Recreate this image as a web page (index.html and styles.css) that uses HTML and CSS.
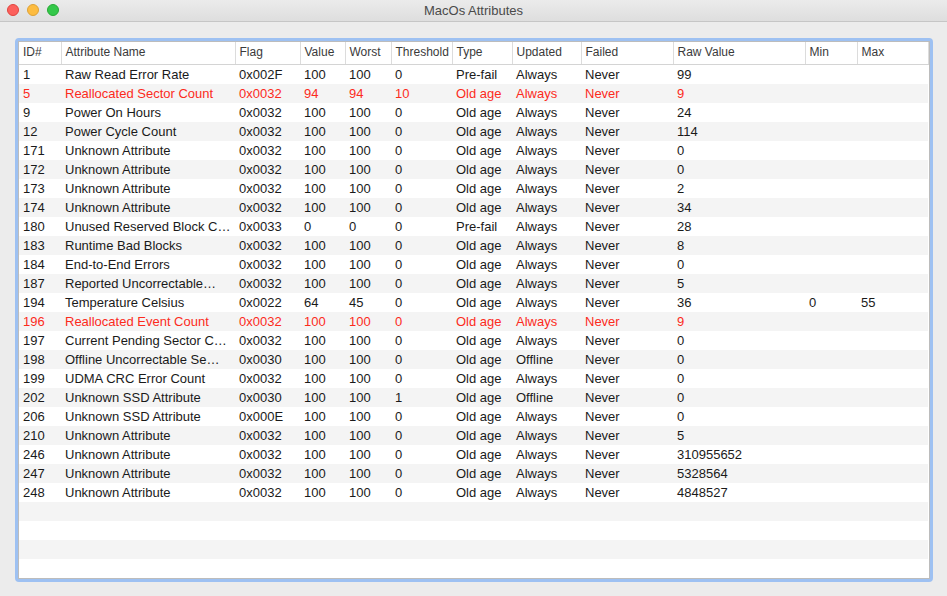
FILE: index.html
```html
<!DOCTYPE html>
<html>
<head>
<meta charset="utf-8">
<title>MacOs Attributes</title>
<link rel="stylesheet" href="styles.css">
</head>
<body>
<div class="window">
  <div class="titlebar">
    <div class="lights">
      <span class="light close"></span>
      <span class="light min"></span>
      <span class="light max"></span>
    </div>
    <div class="title">MacOs Attributes</div>
  </div>
  <div class="content">
    <div class="frame">
      <div class="inner">
        <table class="grid">
          <colgroup>
            <col class="c-id"><col class="c-name"><col class="c-flag"><col class="c-val"><col class="c-worst"><col class="c-thr"><col class="c-type"><col class="c-upd"><col class="c-fail"><col class="c-raw"><col class="c-min"><col class="c-max">
          </colgroup>
          <thead>
            <tr><th class="first">ID#</th><th>Attribute Name</th><th>Flag</th><th>Value</th><th>Worst</th><th>Threshold</th><th>Type</th><th>Updated</th><th>Failed</th><th>Raw Value</th><th>Min</th><th>Max</th></tr>
          </thead>
          <tbody>
            <tr><td class="first">1</td><td>Raw Read Error Rate</td><td>0x002F</td><td>100</td><td>100</td><td>0</td><td>Pre-fail</td><td>Always</td><td>Never</td><td>99</td><td></td><td></td></tr>
            <tr class="warn"><td class="first">5</td><td>Reallocated Sector Count</td><td>0x0032</td><td>94</td><td>94</td><td>10</td><td>Old age</td><td>Always</td><td>Never</td><td>9</td><td></td><td></td></tr>
            <tr><td class="first">9</td><td>Power On Hours</td><td>0x0032</td><td>100</td><td>100</td><td>0</td><td>Old age</td><td>Always</td><td>Never</td><td>24</td><td></td><td></td></tr>
            <tr><td class="first">12</td><td>Power Cycle Count</td><td>0x0032</td><td>100</td><td>100</td><td>0</td><td>Old age</td><td>Always</td><td>Never</td><td>114</td><td></td><td></td></tr>
            <tr><td class="first">171</td><td>Unknown Attribute</td><td>0x0032</td><td>100</td><td>100</td><td>0</td><td>Old age</td><td>Always</td><td>Never</td><td>0</td><td></td><td></td></tr>
            <tr><td class="first">172</td><td>Unknown Attribute</td><td>0x0032</td><td>100</td><td>100</td><td>0</td><td>Old age</td><td>Always</td><td>Never</td><td>0</td><td></td><td></td></tr>
            <tr><td class="first">173</td><td>Unknown Attribute</td><td>0x0032</td><td>100</td><td>100</td><td>0</td><td>Old age</td><td>Always</td><td>Never</td><td>2</td><td></td><td></td></tr>
            <tr><td class="first">174</td><td>Unknown Attribute</td><td>0x0032</td><td>100</td><td>100</td><td>0</td><td>Old age</td><td>Always</td><td>Never</td><td>34</td><td></td><td></td></tr>
            <tr><td class="first">180</td><td>Unused Reserved Block C…</td><td>0x0033</td><td>0</td><td>0</td><td>0</td><td>Pre-fail</td><td>Always</td><td>Never</td><td>28</td><td></td><td></td></tr>
            <tr><td class="first">183</td><td>Runtime Bad Blocks</td><td>0x0032</td><td>100</td><td>100</td><td>0</td><td>Old age</td><td>Always</td><td>Never</td><td>8</td><td></td><td></td></tr>
            <tr><td class="first">184</td><td>End-to-End Errors</td><td>0x0032</td><td>100</td><td>100</td><td>0</td><td>Old age</td><td>Always</td><td>Never</td><td>0</td><td></td><td></td></tr>
            <tr><td class="first">187</td><td>Reported Uncorrectable…</td><td>0x0032</td><td>100</td><td>100</td><td>0</td><td>Old age</td><td>Always</td><td>Never</td><td>5</td><td></td><td></td></tr>
            <tr><td class="first">194</td><td>Temperature Celsius</td><td>0x0022</td><td>64</td><td>45</td><td>0</td><td>Old age</td><td>Always</td><td>Never</td><td>36</td><td>0</td><td>55</td></tr>
            <tr class="warn"><td class="first">196</td><td>Reallocated Event Count</td><td>0x0032</td><td>100</td><td>100</td><td>0</td><td>Old age</td><td>Always</td><td>Never</td><td>9</td><td></td><td></td></tr>
            <tr><td class="first">197</td><td>Current Pending Sector C…</td><td>0x0032</td><td>100</td><td>100</td><td>0</td><td>Old age</td><td>Always</td><td>Never</td><td>0</td><td></td><td></td></tr>
            <tr><td class="first">198</td><td>Offline Uncorrectable Se…</td><td>0x0030</td><td>100</td><td>100</td><td>0</td><td>Old age</td><td>Offline</td><td>Never</td><td>0</td><td></td><td></td></tr>
            <tr><td class="first">199</td><td>UDMA CRC Error Count</td><td>0x0032</td><td>100</td><td>100</td><td>0</td><td>Old age</td><td>Always</td><td>Never</td><td>0</td><td></td><td></td></tr>
            <tr><td class="first">202</td><td>Unknown SSD Attribute</td><td>0x0030</td><td>100</td><td>100</td><td>1</td><td>Old age</td><td>Offline</td><td>Never</td><td>0</td><td></td><td></td></tr>
            <tr><td class="first">206</td><td>Unknown SSD Attribute</td><td>0x000E</td><td>100</td><td>100</td><td>0</td><td>Old age</td><td>Always</td><td>Never</td><td>0</td><td></td><td></td></tr>
            <tr><td class="first">210</td><td>Unknown Attribute</td><td>0x0032</td><td>100</td><td>100</td><td>0</td><td>Old age</td><td>Always</td><td>Never</td><td>5</td><td></td><td></td></tr>
            <tr><td class="first">246</td><td>Unknown Attribute</td><td>0x0032</td><td>100</td><td>100</td><td>0</td><td>Old age</td><td>Always</td><td>Never</td><td>310955652</td><td></td><td></td></tr>
            <tr><td class="first">247</td><td>Unknown Attribute</td><td>0x0032</td><td>100</td><td>100</td><td>0</td><td>Old age</td><td>Always</td><td>Never</td><td>5328564</td><td></td><td></td></tr>
            <tr><td class="first">248</td><td>Unknown Attribute</td><td>0x0032</td><td>100</td><td>100</td><td>0</td><td>Old age</td><td>Always</td><td>Never</td><td>4848527</td><td></td><td></td></tr>
            <tr class="filler"><td colspan="12"></td></tr>
            <tr class="filler"><td colspan="12"></td></tr>
            <tr class="filler"><td colspan="12"></td></tr>
            <tr class="filler"><td colspan="12"></td></tr>
          </tbody>
        </table>
      </div>
    </div>
  </div>
</div>
</body>
</html>
```
FILE: styles.css
```css
* { box-sizing: border-box; }

html, body {
  margin: 0;
  padding: 0;
  width: 947px;
  height: 596px;
  overflow: hidden;
  background: #ececec;
  font-family: "Liberation Sans", Arial, sans-serif;
}

.window {
  display: flex;
  flex-direction: column;
  width: 947px;
  height: 596px;
}

.titlebar {
  height: 22px;
  flex: none;
  background: linear-gradient(#ebebeb, #dedede);
  border-bottom: 1px solid #c6c6c6;
  display: flex;
  align-items: center;
  justify-content: center;
  position: relative;
}

.lights {
  position: absolute;
  left: 7px;
  top: 4px;
  display: flex;
  gap: 8px;
}

.light {
  width: 12px;
  height: 12px;
  border-radius: 50%;
  display: block;
}
.light.close { background: #fc605c; border: 1px solid #e0443e; }
.light.min { background: #fdbc40; border: 1px solid #dea236; }
.light.max { background: #34c84a; border: 1px solid #27aa35; }

.title {
  font-size: 13px;
  color: #4a4a4a;
  line-height: 22px;
}

.content {
  flex: 1;
  padding: 16px 15px 16px 15px;
  display: flex;
}

.frame {
  flex: 1;
  display: flex;
  border: 3px solid #9ec1f2;
  border-radius: 4px;
}

.inner {
  flex: 1;
  background: #fff;
  border: 1px solid #bcbcbc;
  overflow: hidden;
}

.grid {
  border-collapse: collapse;
  table-layout: fixed;
  width: 909px;
}

.c-id { width: 42px; }
.c-name { width: 174px; }
.c-flag { width: 65px; }
.c-val { width: 45px; }
.c-worst { width: 46px; }
.c-thr { width: 61px; }
.c-type { width: 60px; }
.c-upd { width: 69px; }
.c-fail { width: 92px; }
.c-raw { width: 132px; }
.c-min { width: 52px; }
.c-max { width: 71px; }

.grid th {
  height: 22px;
  padding: 0 0 1px 4px;
  font-size: 12px;
  font-weight: normal;
  color: #3a3a3a;
  text-align: left;
  white-space: nowrap;
  overflow: hidden;
  border-bottom: 1px solid #d4d4d4;
  border-right: 1px solid #dcdcdc;
  background: #fff;
}

.grid th.first, .grid td.first { padding-left: 4px; }

.grid td {
  height: 19px;
  padding: 0 0 0 4px;
  font-size: 13px;
  color: #1a1a1a;
  white-space: nowrap;
  overflow: hidden;
  line-height: 19px;
}

.grid tbody tr:nth-child(even) { background: #f4f4f4; }

.grid tr.warn td { color: #fc2b1c; }
```
